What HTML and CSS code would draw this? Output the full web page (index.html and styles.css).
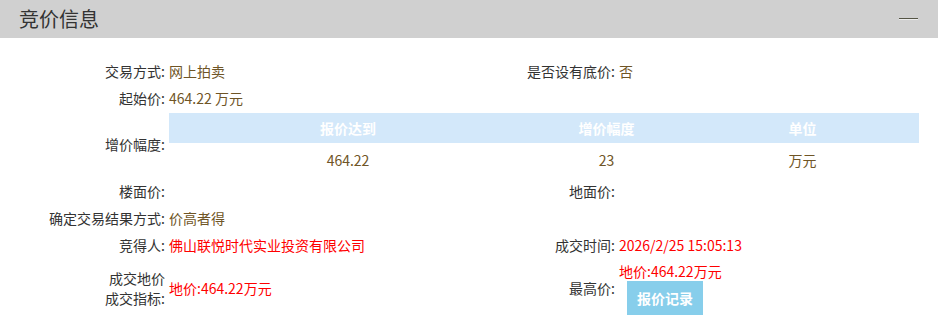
FILE: index.html
```html
<!DOCTYPE html>
<html lang="zh-CN">
<head>
    <meta charset="UTF-8">
    <meta name="viewport" content="width=device-width, initial-scale=1.0">
    <title>竞价信息</title>
    <link rel="stylesheet" href="styles.css">
</head>
<body>
    <div class="panel">
        <div class="panel-head">
            <span class="panel-title">竞价信息</span>
            <span class="fold"></span>
        </div>
        <div class="info-grid">
            <div class="label">交易方式:</div>
            <div class="value">网上拍卖</div>
            <div class="label">是否设有底价:</div>
            <div class="value">否</div>

            <div class="label">起始价:</div>
            <div class="value">464.22 万元</div>
            <div class="label"></div>
            <div class="value"></div>

            <div class="label">增价幅度:</div>
            <div class="span-3">
                <table class="price-table">
                    <thead>
                        <tr>
                            <th class="c1">报价达到</th>
                            <th class="c2">增价幅度</th>
                            <th class="c3">单位</th>
                        </tr>
                    </thead>
                    <tbody>
                        <tr>
                            <td>464.22</td>
                            <td>23</td>
                            <td>万元</td>
                        </tr>
                    </tbody>
                </table>
            </div>

            <div class="label">楼面价:</div>
            <div class="value"></div>
            <div class="label">地面价:</div>
            <div class="value"></div>

            <div class="label">确定交易结果方式:</div>
            <div class="value">价高者得</div>
            <div class="label"></div>
            <div class="value"></div>

            <div class="label">竞得人:</div>
            <div class="value red">佛山联悦时代实业投资有限公司</div>
            <div class="label">成交时间:</div>
            <div class="value red">2026/2/25 15:05:13</div>

            <div class="label two-line">成交地价<br>成交指标:</div>
            <div class="value red">地价:464.22万元</div>
            <div class="label">最高价:</div>
            <div class="value top-price">
                <div class="red">地价:464.22万元</div>
                <button class="record-btn">报价记录</button>
            </div>
        </div>
    </div>
</body>
</html>
```

FILE: styles.css
```css
body {
    margin: 0;
    font-family: "Noto Sans CJK SC", "Noto Sans", sans-serif;
    font-size: 14px;
    color: #333;
    background-color: #fff;
}
.panel-head {
    height: 38px;
    background-color: #d0d0d0;
    display: flex;
    align-items: center;
    justify-content: space-between;
    padding: 0 20px 0 19px;
}
.panel-title {
    font-size: 20px;
    line-height: 38px;
    color: #333;
}
.fold {
    width: 19px;
    height: 1px;
    background-color: #555545;
    border-bottom: 1px solid #ececec;
    margin-top: -1px;
}
.info-grid {
    display: grid;
    grid-template-columns: 165px 285px 165px 1fr;
    grid-auto-rows: minmax(27px, auto);
    align-items: center;
    padding-top: 19px;
    line-height: 20px;
}
.label {
    text-align: right;
    color: #333;
}
.two-line {
    line-height: 20px;
}
.value {
    padding-left: 4px;
    color: #6f5526;
}
.red {
    color: #f00;
}
.span-3 {
    grid-column: 2 / 5;
    padding: 2px 0 1px 4px;
}
.price-table {
    width: 750px;
    border-collapse: collapse;
    table-layout: fixed;
}
.price-table th {
    height: 30px;
    padding: 0;
    background-color: #d3e8fa;
    color: #fff;
    font-weight: bold;
}
.price-table td {
    height: 33px;
    padding: 0;
    text-align: center;
    color: #6f5526;
}
.c1 {
    width: 358px;
}
.c2 {
    width: 159px;
}
.c3 {
    width: 233px;
}
.top-price {
    padding-top: 3px;
    padding-bottom: 3px;
}
.record-btn {
    display: block;
    margin-left: 8px;
    width: 76px;
    height: 34px;
    padding: 0;
    border: none;
    background-color: #87ceeb;
    color: #fff;
    font-family: inherit;
    font-size: 14px;
    font-weight: bold;
    cursor: pointer;
}
```
